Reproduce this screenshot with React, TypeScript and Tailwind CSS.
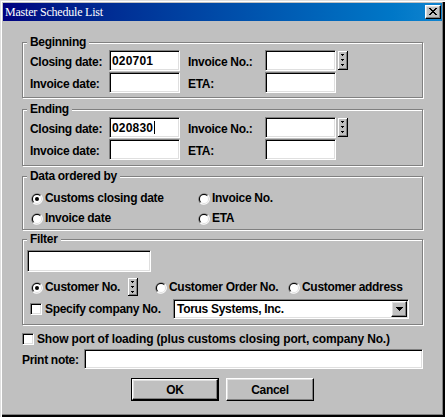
import React from "react";

const sunken =
  "bg-white border border-t-[#808080] border-l-[#808080] border-r-white border-b-white shadow-[inset_1px_1px_#000,inset_-1px_-1px_#dfdfdf]";
const raised =
  "bg-[#c0c0c0] border border-t-white border-l-white border-r-black border-b-black shadow-[inset_-1px_-1px_#808080,inset_1px_1px_#dfdfdf]";
const group =
  "flex flex-col w-[401px] border border-[#808080] shadow-[inset_1px_1px_#fff,1px_1px_#fff]";

function Legend({ children }: { children: React.ReactNode }) {
  return (
    <span className="-mt-[8px] ml-[4px] self-start bg-[#c0c0c0] px-[3px] h-[14px] whitespace-nowrap">
      {children}
    </span>
  );
}

function Radio({ checked }: { checked?: boolean }) {
  return (
    <svg width="12" height="12" viewBox="0 0 12 12" className="shrink-0 mt-[2px]">
      <path d="M10.24 1.76A6 6 0 0 0 1.76 10.24Z" fill="#808080" />
      <path d="M10.24 1.76A6 6 0 0 1 1.76 10.24Z" fill="#fff" />
      <path d="M9.54 2.46A5 5 0 0 0 2.46 9.54Z" fill="#000" />
      <path d="M9.54 2.46A5 5 0 0 1 2.46 9.54Z" fill="#dfdfdf" />
      <circle cx="6" cy="6" r="4" fill="#fff" />
      {checked && <circle cx="6" cy="6" r="2" fill="#000" />}
    </svg>
  );
}

function Check() {
  return <div className={sunken + " w-[12px] h-[12px] shrink-0"} />;
}

function Spin({ h }: { h: number }) {
  return (
    <svg width="10" height={h} viewBox={`0 0 10 ${h}`} className="shrink-0">
      <rect x="0" y="0" width="10" height={h} fill="#c0c0c0" />
      <rect x="0" y="0" width="9" height="1" fill="#fff" />
      <rect x="0" y="0" width="1" height={h - 1} fill="#fff" />
      <rect x="9" y="0" width="1" height={h} fill="#000" />
      <rect x="0" y={h - 1} width="10" height="1" fill="#000" />
      <rect x="8" y="1" width="1" height={h - 2} fill="#808080" />
      <rect x="1" y={h - 2} width="8" height="1" fill="#808080" />
      {[3, 8, 13].map((y) => (
        <g key={y}>
          <rect x="3" y={y} width="3" height="1" fill="#000" />
          <rect x="4" y={y + 1} width="1" height="1" fill="#000" />
        </g>
      ))}
    </svg>
  );
}

function CloseBtn() {
  const px: [number, number, number][] = [
    [0, 0, 2], [6, 0, 2],
    [1, 1, 2], [5, 1, 2],
    [2, 2, 4],
    [3, 3, 2],
    [2, 4, 4],
    [1, 5, 2], [5, 5, 2],
    [0, 6, 2], [6, 6, 2],
  ];
  return (
    <div className={raised + " w-[16px] h-[14px] flex items-center justify-center"}>
      <svg width="8" height="7" viewBox="0 0 8 7" className="-mt-[1px]">
        {px.map(([x, y, w], i) => (
          <rect key={i} x={x} y={y} width={w} height="1" fill="#000" />
        ))}
      </svg>
    </div>
  );
}

function DateRow({
  l1,
  l2,
  value,
  caret,
  spin,
}: {
  l1: string;
  l2: string;
  value?: string;
  caret?: boolean;
  spin?: boolean;
}) {
  return (
    <div className="flex h-[21px] items-center">
      <span className="w-[79px] pt-[3px]">{l1}</span>
      <div className={sunken + " w-[71px] h-[21px] flex items-center pl-[2px]"}>
        <span className="tracking-[0.2px]">{value}</span>
        {caret && <span className="w-px h-[13px] bg-black ml-[1px]" />}
      </div>
      <span className="ml-[8px] w-[77px] pt-[3px]">{l2}</span>
      <div className={sunken + " w-[71px] h-[21px]"} />
      {spin && (
        <div className="ml-[2px]">
          <Spin h={19} />
        </div>
      )}
    </div>
  );
}

function DateGroup({
  title,
  value,
  caret,
  pb,
  mt,
}: {
  title: string;
  value: string;
  caret?: boolean;
  pb: string;
  mt: string;
}) {
  return (
    <div className={group + " " + mt + " " + pb}>
      <Legend>{title}</Legend>
      <div className="mt-[1px] flex flex-col gap-[1px] pl-[7px]">
        <DateRow l1="Closing date:" l2="Invoice No.:" value={value} caret={caret} spin />
        <DateRow l1="Invoice date:" l2="ETA:" />
      </div>
    </div>
  );
}

export default function App() {
  return (
    <div className="w-[445px] h-[417px] bg-[#c0c0c0] pt-[3px] pl-[3px] pr-[3px] text-black text-[12px] font-bold tracking-[-0.3px] leading-[14px] font-['Liberation_Sans',Arial,sans-serif] shadow-[inset_1px_1px_#dfdfdf,inset_2px_2px_#fff,inset_-2px_-2px_#000,inset_-3px_-3px_#808080]">
      <div className="h-[18px] flex items-center justify-between bg-linear-to-r from-[#000080] to-[#1084d0] pl-[2px] pr-[1px]">
        <span className="font-['Liberation_Serif',serif] font-normal text-white text-[12px] tracking-[-0.2px] leading-[14px]">
          Master Schedule List
        </span>
        <CloseBtn />
      </div>

      <div className="pl-[19px] flex flex-col">
        <DateGroup title="Beginning" value="020701" mt="mt-[21px]" pb="pb-[4px]" />
        <DateGroup title="Ending" value="020830" caret mt="mt-[11px]" pb="pb-[5px]" />

        <div className={group + " mt-[10px] pb-[1px]"}>
          <Legend>Data ordered by</Legend>
          <div className="mt-[5px] pl-[8px] flex flex-col">
            <div className="flex h-[20px] items-center">
              <div className="w-[167px] flex items-center gap-[2px]">
                <Radio checked />
                <span>Customs closing date</span>
              </div>
              <div className="flex items-center gap-[2px]">
                <Radio />
                <span>Invoice No.</span>
              </div>
            </div>
            <div className="flex h-[20px] items-center">
              <div className="w-[167px] flex items-center gap-[2px]">
                <Radio />
                <span>Invoice date</span>
              </div>
              <div className="flex items-center gap-[2px]">
                <Radio />
                <span>ETA</span>
              </div>
            </div>
          </div>
        </div>

        <div className={group + " mt-[9px] pb-[5px]"}>
          <Legend>Filter</Legend>
          <div className={sunken + " mt-[4px] ml-[4px] w-[124px] h-[22px]"} />
          <div className="mt-[5px] h-[19px] flex items-center pl-[8px]">
            <div className="w-[97px] flex items-center gap-[2px]">
              <Radio checked />
              <span>Customer No.</span>
            </div>
            <Spin h={18} />
            <div className="ml-[17px] w-[133px] flex items-center gap-[2px]">
              <Radio />
              <span>Customer Order No.</span>
            </div>
            <div className="flex items-center gap-[2px]">
              <Radio />
              <span>Customer address</span>
            </div>
          </div>
          <div className="mt-[3px] h-[20px] flex items-center pl-[7px]">
            <div className="w-[143px] flex items-center gap-[3px]">
              <Check />
              <span>Specify company No.</span>
            </div>
            <div className={sunken + " w-[236px] h-[20px] flex items-center justify-between pl-[3px] pr-[1px]"}>
              <span>Torus Systems, Inc.</span>
              <div className={raised + " w-[16px] h-[16px] flex items-center justify-center"}>
                <svg width="7" height="4" viewBox="0 0 7 4">
                  <rect x="0" y="0" width="7" height="1" fill="#000" />
                  <rect x="1" y="1" width="5" height="1" fill="#000" />
                  <rect x="2" y="2" width="3" height="1" fill="#000" />
                  <rect x="3" y="3" width="1" height="1" fill="#000" />
                </svg>
              </div>
            </div>
          </div>
        </div>

        <div className="mt-[6px] h-[16px] flex items-center gap-[3px]">
          <Check />
          <span className="whitespace-nowrap tracking-[-0.15px]">
            Show port of loading (plus customs closing port, company No.)
          </span>
        </div>

        <div className="mt-[2px] h-[20px] flex items-center">
          <span className="w-[62px] pt-[2px]">Print note:</span>
          <div className={sunken + " w-[339px] h-[20px]"} />
        </div>

        <div className="mt-[9px] ml-[109px] flex gap-[7px]">
          <div className="w-[88px] h-[23px] border border-black">
            <div className={raised + " w-full h-full flex items-center justify-center"}>OK</div>
          </div>
          <div className={raised + " w-[88px] h-[23px] flex items-center justify-center"}>Cancel</div>
        </div>
      </div>
    </div>
  );
}
